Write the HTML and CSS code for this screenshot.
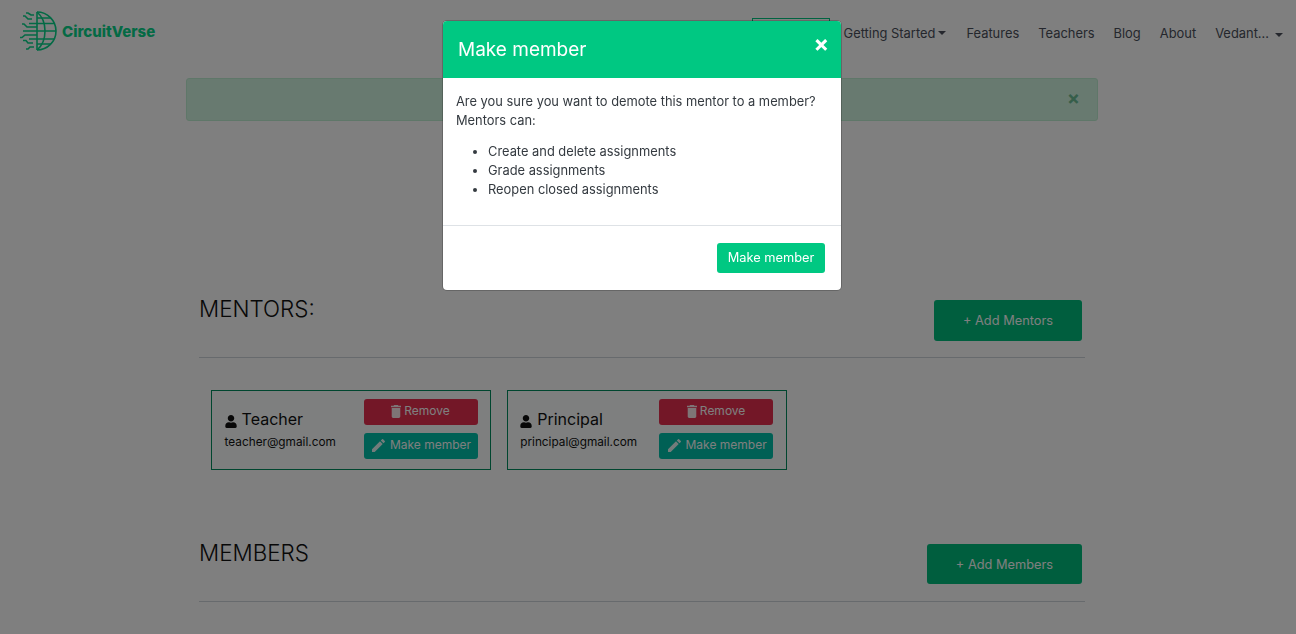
FILE: index.html
```html
<!DOCTYPE html>
<html lang="en">

<head>
  <meta charset="UTF-8">
  <meta name="viewport" content="width=device-width, initial-scale=1.0">
  <title>CircuitVerse - Group</title>
  <link rel="stylesheet" href="styles.css">
</head>

<body>
  <div class="page">
    <header class="navbar">
      <a class="brand" href="#">
        <svg class="brand-logo" viewBox="0 0 38 40" fill="none" stroke="currentColor" stroke-width="1.6">
          <path d="M18 1a19 19 0 1 1 0 38"/>
          <path d="M18 1c6 5 8 12 8 19s-2 14-8 19"/>
          <path d="M18 1v38"/>
          <path d="M18 7h14M10 12.500h25M4 20h33M10 28h25M18 33h14"/>
          <path d="M15 4h-3L9 2H7M13 8H9L6 5H4M14 16H8L5 13H3M13 24H6l-3 2.500H1M14 32H9l-2-2.500H4M15 36h-4l-2 2H7M18 16h-4M18 24h-5"/>
        </svg>
        <span class="brand-name">CircuitVerse</span>
      </a>
      <nav class="nav-links">
        <a class="nav-outline" href="#"></a>
        <a class="nav-link caret caret-first" href="#">Getting Started</a>
        <a class="nav-link" href="#">Features</a>
        <a class="nav-link" href="#">Teachers</a>
        <a class="nav-link" href="#">Blog</a>
        <a class="nav-link" href="#">About</a>
        <a class="nav-link caret caret-wide" href="#">Vedant...</a>
      </nav>
    </header>

    <main class="content">
      <div class="alert">
        <span class="alert-close">&times;</span>
      </div>

      <section class="group-section mentors">
        <div class="section-head">
          <h2 class="section-title">MENTORS:</h2>
          <a class="btn-add btn-add-mentors" href="#">+ Add Mentors</a>
        </div>
        <div class="card-row">
          <div class="person-card">
            <div class="person-info">
              <div class="person-name">
                <svg class="icon-user" viewBox="0 0 448 512"><path d="M224 256c70.700 0 128-57.300 128-128S294.700 0 224 0 96 57.300 96 128s57.300 128 128 128zm89.600 32h-16.700c-22.200 10.200-46.900 16-72.900 16s-50.600-5.800-72.900-16h-16.700C60.200 288 0 348.200 0 422.400V464c0 26.500 21.500 48 48 48h352c26.500 0 48-21.500 48-48v-41.600c0-74.200-60.200-134.400-134.400-134.400z"/></svg>
                Teacher
              </div>
              <div class="person-email">teacher@gmail.com</div>
            </div>
            <div class="person-actions">
              <a class="btn-small btn-remove" href="#">
                <svg class="icon-small" viewBox="5 3 14 18"><path d="M6 19c0 1.100.9 2 2 2h8c1.100 0 2-.9 2-2V7H6v12zM19 4h-3.500l-1-1h-5l-1 1H5v2h14V4z"/></svg>
                Remove
              </a>
              <a class="btn-small btn-demote" href="#">
                <svg class="icon-small icon-pencil" viewBox="3 3 18 18"><path d="M3 17.250V21h3.750L17.810 9.940l-3.750-3.750L3 17.250zM20.710 7.040a1 1 0 0 0 0-1.410l-2.340-2.340a1 1 0 0 0-1.410 0l-1.830 1.830 3.750 3.750 1.830-1.830z"/></svg>
                Make member
              </a>
            </div>
          </div>

          <div class="person-card">
            <div class="person-info">
              <div class="person-name">
                <svg class="icon-user" viewBox="0 0 448 512"><path d="M224 256c70.700 0 128-57.300 128-128S294.700 0 224 0 96 57.300 96 128s57.300 128 128 128zm89.600 32h-16.700c-22.200 10.200-46.900 16-72.900 16s-50.600-5.800-72.900-16h-16.700C60.200 288 0 348.200 0 422.400V464c0 26.500 21.500 48 48 48h352c26.500 0 48-21.500 48-48v-41.600c0-74.200-60.200-134.400-134.400-134.400z"/></svg>
                Principal
              </div>
              <div class="person-email">principal@gmail.com</div>
            </div>
            <div class="person-actions">
              <a class="btn-small btn-remove" href="#">
                <svg class="icon-small" viewBox="5 3 14 18"><path d="M6 19c0 1.100.9 2 2 2h8c1.100 0 2-.9 2-2V7H6v12zM19 4h-3.500l-1-1h-5l-1 1H5v2h14V4z"/></svg>
                Remove
              </a>
              <a class="btn-small btn-demote" href="#">
                <svg class="icon-small icon-pencil" viewBox="3 3 18 18"><path d="M3 17.250V21h3.750L17.810 9.940l-3.750-3.750L3 17.250zM20.710 7.040a1 1 0 0 0 0-1.410l-2.340-2.340a1 1 0 0 0-1.410 0l-1.830 1.830 3.750 3.750 1.830-1.830z"/></svg>
                Make member
              </a>
            </div>
          </div>
        </div>
      </section>

      <section class="group-section members">
        <div class="section-head">
          <h2 class="section-title">MEMBERS</h2>
          <a class="btn-add btn-add-members" href="#">+ Add Members</a>
        </div>
      </section>
    </main>
  </div>

  <div class="modal-backdrop"></div>

  <div class="modal-wrap">
    <div class="modal">
      <div class="modal-header">
        <h4 class="modal-title">Make member</h4>
        <span class="modal-close">&times;</span>
      </div>
      <div class="modal-body">
        <p class="modal-text">Are you sure you want to demote this mentor to a member?<br>Mentors can:</p>
        <ul class="modal-list">
          <li>Create and delete assignments</li>
          <li>Grade assignments</li>
          <li>Reopen closed assignments</li>
        </ul>
      </div>
      <div class="modal-footer">
        <a class="btn-modal" href="#">Make member</a>
      </div>
    </div>
  </div>
</body>

</html>
```

FILE: styles.css
```css
* {
  box-sizing: border-box;
}

html,
body {
  height: 100%;
}

body {
  margin: 0;
  overflow: hidden;
  background-color: #fff;
  color: #212529;
  font-family: Inter, "Liberation Sans", sans-serif;
  font-size: 13px;
}

a {
  color: inherit;
  text-decoration: none;
}

.page {
  padding-right: 12px;
}

/* navbar */
.navbar {
  display: flex;
  justify-content: space-between;
  height: 78px;
  padding: 13px 1px 0 19px;
}

.brand {
  display: flex;
  align-items: center;
  align-self: flex-start;
  gap: 5px;
  color: #08d48a;
}

.brand-logo {
  width: 38px;
  height: 40px;
  margin-top: -2px;
}

.brand-name {
  font-size: 15px;
  font-weight: 800;
  margin-top: -1px;
}

.nav-links {
  display: flex;
  align-items: flex-start;
  gap: 19px;
  padding-top: 5px;
}

.nav-link {
  margin-top: 8px;
  line-height: 16px;
  font-size: 12.900px;
  color: #4a4f5a;
}

.nav-outline {
  width: 78px;
  height: 30px;
  margin-right: -5px;
  border: 1px solid #00c882;
}

.caret::after {
  content: "";
  display: inline-block;
  margin-left: 3px;
  vertical-align: 3px;
  border-top: 4px solid currentColor;
  border-left: 4px solid transparent;
  border-right: 4px solid transparent;
}

.caret-first {
  margin-right: 1px;
}

.caret-wide::after {
  margin-left: 6px;
  vertical-align: 1px;
}

/* alert */
.content {
  width: 912px;
  margin: 0 auto;
}

.alert {
  display: flex;
  justify-content: flex-end;
  align-items: center;
  height: 43px;
  padding: 0 17px 2px 0;
  background-color: #d1f4e0;
  border: 1px solid #bfeed2;
  border-radius: 3px;
}

.alert-close {
  font-size: 19px;
  font-weight: 700;
  line-height: 1;
  color: #6cbc94;
}

/* sections */
.group-section {
  margin: 0 13px;
}

.mentors {
  padding-top: 179px;
}

.members {
  padding-top: 74px;
}

.section-head {
  display: flex;
  justify-content: space-between;
  align-items: flex-start;
  padding: 0 3px 16px 0;
  border-bottom: 1px solid #ced4da;
}

.members .section-head {
  padding-bottom: 17px;
}

.section-title {
  margin: -4px 0 0;
  font-size: 22.400px;
  font-weight: 300;
  line-height: 26px;
  color: #111;
}

.btn-add {
  display: flex;
  align-items: center;
  justify-content: center;
  height: 41px;
  background-color: #00bd7d;
  border-radius: 3px;
  font-size: 12.800px;
  color: #fff;
}

.btn-add-mentors {
  width: 148px;
}

.btn-add-members {
  width: 155px;
  height: 40px;
}

/* mentor cards */
.card-row {
  display: flex;
  gap: 15.600px;
  padding: 32px 0 0 12.400px;
}

.person-card {
  display: flex;
  justify-content: space-between;
  align-items: center;
  width: 280px;
  height: 80px;
  padding: 0 12.900px 0 12.200px;
  border: 1px solid #008c5e;
  background-color: #fcffff;
}

.person-info {
  margin-top: -1px;
}

.person-name {
  display: flex;
  align-items: center;
  gap: 5px;
  font-size: 16px;
  line-height: 22px;
  color: #111;
}

.icon-user {
  width: 12px;
  height: 13px;
  margin-top: 4px;
  fill: currentColor;
}

.person-email {
  margin-top: 3px;
  font-size: 11.800px;
  line-height: 18px;
  color: #111;
}

.person-actions {
  display: flex;
  flex-direction: column;
  gap: 8px;
  margin-top: -2px;
}

.btn-small {
  display: flex;
  align-items: center;
  justify-content: center;
  gap: 3px;
  width: 114px;
  height: 26px;
  padding-bottom: 4px;
  border-radius: 3px;
  font-size: 12px;
  color: #fff;
}

.btn-remove {
  background-color: #e62e4f;
}

.btn-demote {
  padding-left: 2px;
  background-color: #00c0aa;
  gap: 5px;
}

.icon-small {
  width: 10px;
  height: 13px;
  margin-top: 2px;
  fill: currentColor;
  opacity: 0.9;
}

.icon-pencil {
  width: 13px;
  height: 13px;
}

/* modal */
.modal-backdrop {
  position: fixed;
  top: 0;
  left: 0;
  width: 100%;
  height: 100%;
  background-color: rgba(0, 0, 0, 0.5);
}

.modal-wrap {
  position: fixed;
  top: 21px;
  left: 0;
  right: 12px;
  display: flex;
  justify-content: center;
}

.modal {
  width: 398px;
  height: 269px;
  background-color: #fff;
  border-radius: 4px;
  box-shadow: 0 0 0 1px rgba(0, 0, 0, 0.2);
  overflow: hidden;
}

.modal-header {
  display: flex;
  justify-content: space-between;
  align-items: flex-start;
  height: 57px;
  padding: 0 12px 0 15px;
  background-color: #00c882;
  color: #fff;
}

.modal-title {
  margin: 15px 0 0;
  font-size: 19px;
  font-weight: 400;
  line-height: 27px;
}

.modal-close {
  margin-top: 10px;
  font-size: 23px;
  font-weight: 700;
  line-height: 27px;
}

.modal-body {
  height: 148px;
  padding: 14px 13px 0;
  border-bottom: 1px solid #dee2e6;
  font-size: 12.860px;
  line-height: 19px;
  color: #343a40;
}

.modal-text {
  margin: 0 0 12px;
}

.modal-list {
  margin: 0;
  padding-left: 32px;
}

.modal-footer {
  display: flex;
  justify-content: flex-end;
  padding: 17px 16px 0 0;
}

.btn-modal {
  display: flex;
  align-items: center;
  justify-content: center;
  width: 108px;
  height: 30px;
  padding-bottom: 2px;
  background-color: #00c882;
  border-radius: 3px;
  font-size: 12.800px;
  color: #fff;
}
```
